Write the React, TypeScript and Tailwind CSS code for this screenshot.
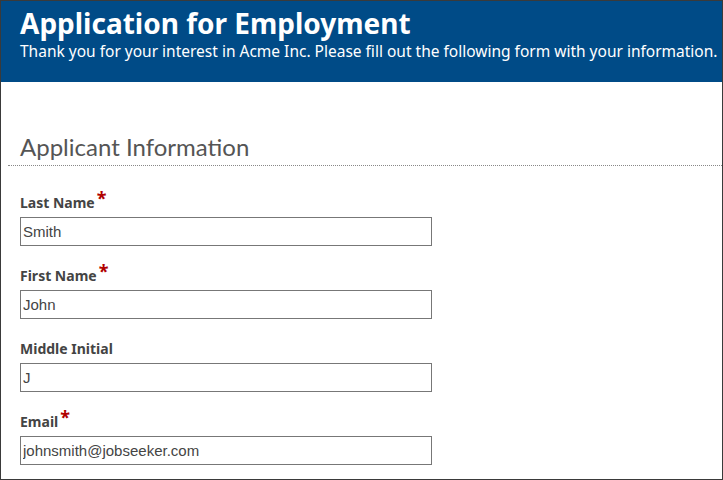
import React from "react";

const fields = [
  { label: "Last Name", value: "Smith", required: true },
  { label: "First Name", value: "John", required: true },
  { label: "Middle Initial", value: "J", required: false },
  { label: "Email", value: "johnsmith@jobseeker.com", required: true },
];

export default function App() {
  return (
    <div className="w-[723px] h-[480px] border border-[#3a3a3a] bg-white overflow-hidden box-border">
      <div className="bg-[#004b87] h-[81px] pl-[19px] pt-[5px] text-white" style={{ fontFamily: '"Noto Sans", sans-serif' }}>
        <h1 className="text-[28px] leading-[35px] font-bold whitespace-nowrap">Application for Employment</h1>
        <p className="text-[15.5px] leading-[20px] whitespace-nowrap">Thank you for your interest in Acme Inc. Please fill out the following form with your information.</p>
      </div>
      <div className="pl-[7px] pt-[50px]">
        <h2
          className="pl-[12px] text-[24px] leading-[30px] text-[#555] border-b border-dotted border-[#888] pb-[3px]"
          style={{ fontFamily: 'Lato, sans-serif' }}
        >
          Applicant Information
        </h2>
        <div className="pl-[12px] pt-[25px] flex flex-col gap-[18px]">
          {fields.map((f) => (
            <div key={f.label} className="flex flex-col">
              <label
                className="h-[20px] flex items-end text-[14px] font-bold text-[#444] leading-[16px] mb-[6px]"
                style={{ fontFamily: '"Noto Sans", sans-serif' }}
              >
                {f.label}
                {f.required && <span className="text-[#b00000] text-[18px] leading-[14px] self-start ml-[2px]">*</span>}
              </label>
              <input
                readOnly
                value={f.value}
                className="w-[412px] h-[29px] border border-[#777] px-[2px] text-[15px] text-[#444] outline-none"
                style={{ fontFamily: '"Liberation Sans", Arial, sans-serif' }}
              />
            </div>
          ))}
        </div>
      </div>
    </div>
  );
}
